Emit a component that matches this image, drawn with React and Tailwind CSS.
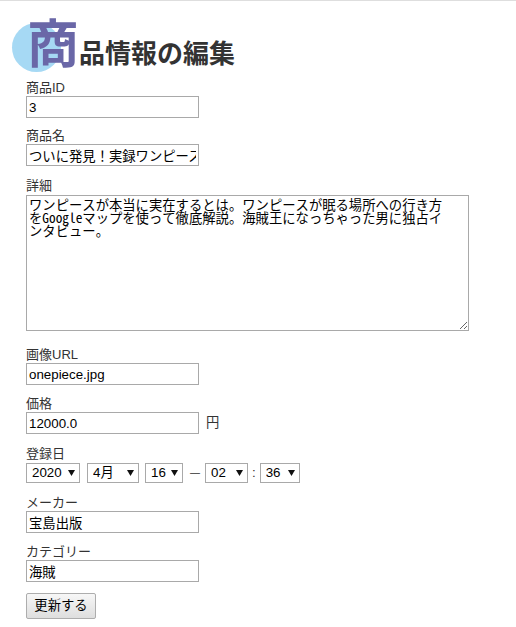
import React from 'react';

const font = { fontFamily: '"Liberation Sans", "Noto Sans CJK JP", sans-serif' };

const Label = ({ children }) => (
  <div className="text-[13px] leading-[16px] text-[#333]">{children}</div>
);

const TextField = ({ value }) => (
  <input
    type="text"
    defaultValue={value}
    className="block w-[173px] h-[22px] border border-[#a9a9a9] px-[2px] text-[13.33px] text-black bg-white outline-none"
  />
);

const Caret = () => (
  <svg className="absolute top-[7px] right-[5px] w-[7px] h-[6px]" viewBox="0 0 7 6">
    <polygon points="0,0 7,0 3.5,6" fill="#111" />
  </svg>
);

const Select = ({ value, options, width }) => (
  <div className={`relative ${width}`}>
    <select
      defaultValue={value}
      className="appearance-none block w-full h-[20px] border border-[#a9a9a9] bg-white pl-[5px] text-[13.33px] leading-[18px] text-black outline-none"
    >
      {options.map((o) => (
        <option key={o} value={o}>{o}</option>
      ))}
    </select>
    <Caret />
  </div>
);

const detail =
  'ワンピースが本当に実在するとは。ワンピースが眠る場所への行き方\nをGoogleマップを使って徹底解説。海賊王になっちゃった男に独占イ\nンタビュー。';

export default function App() {
  return (
    <div className="min-h-[627px] bg-white border-t border-[#dedede]" style={font}>
      <div className="relative pt-[18px] pl-[27px] flex items-baseline">
        <div className="absolute left-[12px] top-[22px] w-[49px] h-[49px] rounded-full bg-[#a6d9f4]" />
        <span className="relative text-[52px] leading-none font-bold text-[#6a67a7]">商</span>
        <span className="relative text-[26px] leading-none font-bold text-[#333]">品情報の編集</span>
      </div>

      <div className="pl-[26px] pt-[9px]">
        <div className="mb-[10px]">
          <Label>商品ID</Label>
          <TextField value="3" />
        </div>
        <div className="mb-[11px]">
          <Label>商品名</Label>
          <TextField value="ついに発見！実録ワンピース" />
        </div>
        <div className="mb-[16px]">
          <div className="text-[13px] leading-[18px] text-[#333]">詳細</div>
          <textarea
            defaultValue={detail}
            className="block w-[443px] h-[136px] border border-[#a9a9a9] p-[2px] text-[13.33px] leading-[13px] text-black bg-white outline-none whitespace-pre"
            style={{ fontFamily: '"Noto Sans Mono CJK JP", "Noto Sans CJK JP", monospace' }}
          />
        </div>
        <div className="mb-[11px]">
          <Label>画像URL</Label>
          <TextField value="onepiece.jpg" />
        </div>
        <div className="mb-[11px]">
          <Label>価格</Label>
          <div className="flex items-center">
            <TextField value="12000.0" />
            <span className="ml-[7px] text-[13.33px] text-[#333]">円</span>
          </div>
        </div>
        <div className="mb-[12px]">
          <div className="text-[13px] leading-[18px] text-[#333]">登録日</div>
          <div className="flex items-center text-[13.33px] text-[#333]">
            <Select value="2020" options={['2019', '2020', '2021']} width="w-[54px]" />
            <div className="w-[7px]" />
            <Select value="4月" options={['1月', '2月', '3月', '4月', '5月']} width="w-[52px]" />
            <div className="w-[6px]" />
            <Select value="16" options={['15', '16', '17']} width="w-[38px]" />
            <span className="ml-[7px] mr-[5px] text-[10px] leading-none">—</span>
            <Select value="02" options={['01', '02', '03']} width="w-[43px]" />
            <span className="mx-[4px]">:</span>
            <Select value="36" options={['35', '36', '37']} width="w-[40px]" />
          </div>
        </div>
        <div className="mb-[11px]">
          <Label>メーカー</Label>
          <TextField value="宝島出版" />
        </div>
        <div className="mb-[11px]">
          <Label>カテゴリー</Label>
          <TextField value="海賊" />
        </div>
        <button className="w-[70px] h-[26px] border border-[#adadad] rounded-[2px] bg-gradient-to-b from-[#f7f7f7] to-[#dedede] text-[13.33px] text-black">
          更新する
        </button>
      </div>
    </div>
  );
}
